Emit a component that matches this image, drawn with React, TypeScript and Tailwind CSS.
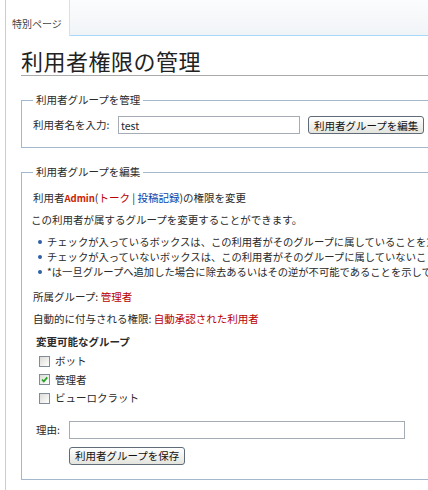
import React from "react";

const Checkbox = ({ checked }: { checked?: boolean }) => (
  <span className="relative inline-block w-[11px] h-[11px] border border-[#7f8c99] bg-gradient-to-br from-[#dcdcd7] to-white">
    {checked && (
      <svg viewBox="0 0 9 9" className="absolute inset-0 w-[9px] h-[9px]">
        <path d="M2 4.5 L3.8 6.5 L7.2 2.4" fill="none" stroke="#21a121" strokeWidth="1.7" />
      </svg>
    )}
  </span>
);

const Button = ({ label }: { label: string }) => (
  <button className="h-[18px] px-[5px] rounded-[3px] border border-[#5f6b78] bg-gradient-to-b from-white to-[#e4e4de] text-[10.5px] leading-[15px] text-[#111]">
    {label}
  </button>
);

const groups = [
  { name: "ボット", checked: false },
  { name: "管理者", checked: true },
  { name: "ビューロクラット", checked: false },
];

const bullets = [
  "チェックが入っているボックスは、この利用者がそのグループに属していることを意味します。",
  "チェックが入っていないボックスは、この利用者がそのグループに属していないことを意味します。",
  "*は一旦グループへ追加した場合に除去あるいはその逆が不可能であることを示しています。",
];

export default function App() {
  return (
    <div
      className="w-[428px] h-[490px] overflow-hidden bg-white text-[10.5px] text-[#2a2a2a]"
      style={{ fontFamily: '"Noto Sans CJK JP", "Noto Sans", sans-serif' }}
    >
      <div className="ml-[5px] w-[700px] h-full border-l border-[#a7d7f9]">
        {/* tab strip */}
        <div className="h-[36px] flex bg-gradient-to-b from-[#fbfcfd] to-[#f1f4f7] border-b border-[#a7d7f9]">
          <div className="h-[36px] w-[64px] bg-white border-r border-[#cfe3f3] flex items-center pl-[6px] pt-[10px] text-[10px] text-[#444]">
            特別ページ
          </div>
        </div>

        <div className="pl-[15px]">
          <h1 className="mt-[9px] text-[22px] leading-[30px] text-[#222] tracking-[0.5px] border-b border-[#aaa]">
            利用者権限の管理
          </h1>

          {/* fieldset 1 */}
          <fieldset className="mt-[17px] border border-[#a3b8cc] pl-[11px] pb-[13px]">
            <legend className="px-[3px] leading-[14px]">利用者グループを管理</legend>
            <div className="mt-[9px] flex items-center h-[18px]">
              <span className="w-[85px]">利用者名を入力:</span>
              <input
                readOnly
                value="test"
                className="w-[182px] h-[18px] border border-[#a5acb5] px-[2px] text-[10.5px] outline-none"
              />
              <span className="ml-[8px]">
                <Button label="利用者グループを編集" />
              </span>
            </div>
          </fieldset>

          {/* fieldset 2 */}
          <fieldset className="mt-[17px] border border-[#a3b8cc] pl-[11px] pb-[14px]">
            <legend className="px-[3px] leading-[14px]">利用者グループを編集</legend>
            <p className="mt-[11px] leading-[15px]">
              利用者<b className="text-[#cc2200] text-[9.5px]">Admin</b>(<span className="text-[#ba0000]">トーク</span> |{" "}
              <span className="text-[#0645ad]">投稿記録</span>)の権限を変更
            </p>
            <p className="mt-[6px] -ml-[2px] leading-[15px]">
              この利用者が属するグループを変更することができます。
            </p>
            <ul className="mt-[7px] text-[10.3px]">
              {bullets.map((b) => (
                <li key={b} className="flex items-center leading-[15px] whitespace-nowrap">
                  <span className="ml-[5px] mr-[5px] w-[4px] h-[4px] rounded-full bg-[#2f5fa7]" />
                  {b}
                </li>
              ))}
            </ul>
            <p className="mt-[10px] leading-[15px]">
              所属グループ: <span className="text-[#ba0000]">管理者</span>
            </p>
            <p className="mt-[7px] leading-[15px]">
              自動的に付与される権限: <span className="text-[#ba0000]">自動承認された利用者</span>
            </p>
            <div className="ml-[3px]">
              <h3 className="mt-[8px] font-bold leading-[15px]">変更可能なグループ</h3>
              <div className="mt-[3px]">
                {groups.map((g) => (
                  <div key={g.name} className="h-[18.5px] flex items-center">
                    <span className="ml-[3px] mr-[5px] flex">
                      <Checkbox checked={g.checked} />
                    </span>
                    {g.name}
                  </div>
                ))}
              </div>
              <div className="mt-[13px] flex items-center">
                <span className="w-[33px]">理由:</span>
                <div className="w-[336px] h-[18px] border border-[#a5acb5]" />
              </div>
              <div className="mt-[8px] ml-[33px]">
                <Button label="利用者グループを保存" />
              </div>
            </div>
          </fieldset>
        </div>
      </div>
    </div>
  );
}
